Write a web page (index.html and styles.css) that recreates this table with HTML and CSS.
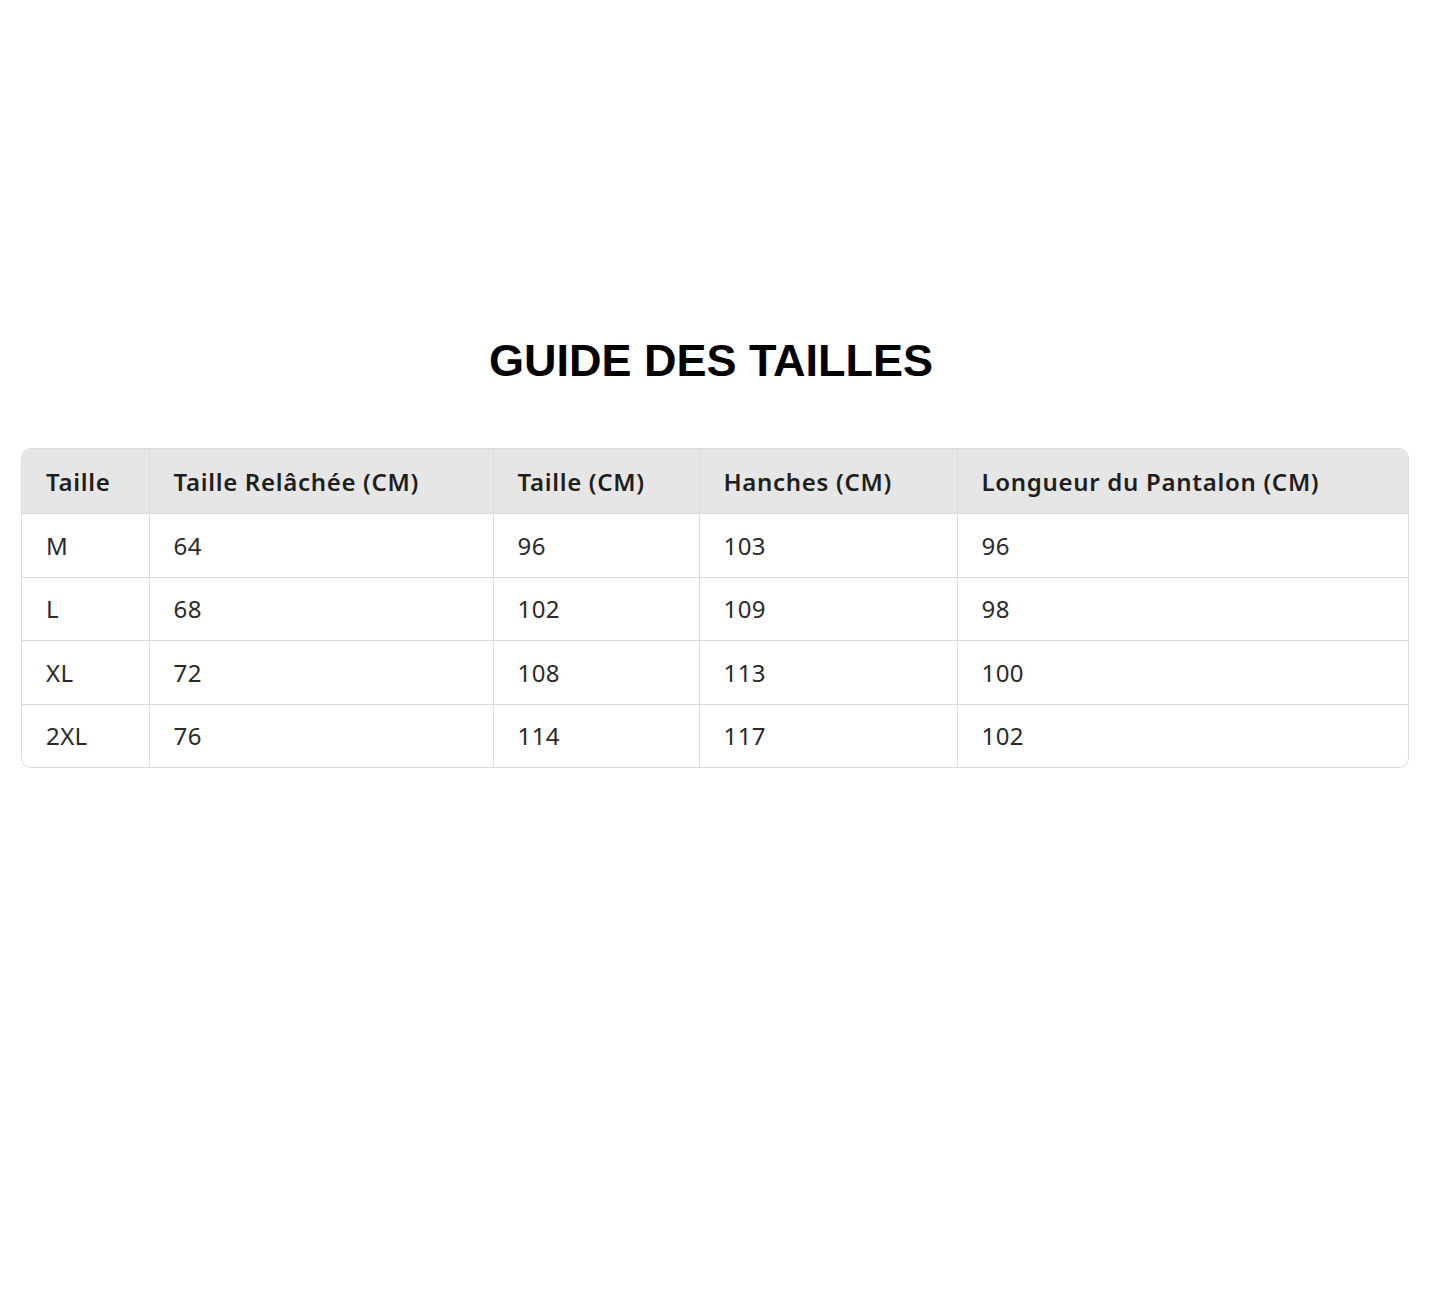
FILE: index.html
```html
<!DOCTYPE html>
<html lang="fr">
<head>
<meta charset="utf-8">
<title>Guide des tailles</title>
<link rel="stylesheet" href="styles.css">
</head>
<body>
<main class="page">
  <h1 class="title">GUIDE DES TAILLES</h1>
  <div class="table-wrap">
    <table class="size-table">
      <colgroup>
        <col class="c1"><col class="c2"><col class="c3"><col class="c4"><col class="c5">
      </colgroup>
      <thead>
        <tr>
          <th>Taille</th>
          <th>Taille Relâchée (CM)</th>
          <th>Taille (CM)</th>
          <th>Hanches (CM)</th>
          <th>Longueur du Pantalon (CM)</th>
        </tr>
      </thead>
      <tbody>
        <tr><td>M</td><td>64</td><td>96</td><td>103</td><td>96</td></tr>
        <tr><td>L</td><td>68</td><td>102</td><td>109</td><td>98</td></tr>
        <tr><td>XL</td><td>72</td><td>108</td><td>113</td><td>100</td></tr>
        <tr><td>2XL</td><td>76</td><td>114</td><td>117</td><td>102</td></tr>
      </tbody>
    </table>
  </div>
</main>
</body>
</html>
```
FILE: styles.css
```css
html, body {
  margin: 0;
  padding: 0;
  background: #ffffff;
}

.page {
  padding: 333px 21px 0 21px;
}

.title {
  margin: 0 0 59px 0;
  padding-right: 8px;
  font-family: "Liberation Sans", Arial, sans-serif;
  font-weight: 700;
  font-size: 45px;
  line-height: 56px;
  text-align: center;
  color: #000;
}

.table-wrap {
  border: 1px solid #dcdcdc;
  border-radius: 10px;
  overflow: hidden;
}

.size-table {
  width: 100%;
  border-collapse: collapse;
  table-layout: fixed;
  font-family: "Noto Sans", "Open Sans", sans-serif;
  font-size: 24px;
  letter-spacing: 0.4px;
  color: #222;
}

.c1 { width: 127px; }
.c2 { width: 344px; }
.c3 { width: 206px; }
.c4 { width: 258px; }

.size-table th,
.size-table td {
  text-align: left;
  padding: 0 0 0 24px;
  border-left: 1px solid #dcdcdc;
  border-top: 1px solid #dcdcdc;
  vertical-align: middle;
  white-space: nowrap;
}

.size-table th:first-child,
.size-table td:first-child {
  border-left: none;
}

.size-table thead th {
  border-top: none;
  height: 64px;
  background: #e6e6e6;
  font-weight: 600;
  letter-spacing: 0.7px;
  color: #1e1e1e;
}

.size-table thead tr {
  border-bottom: 1px solid #d0d0d0;
}

.size-table tbody td {
  height: 62.5px;
  font-weight: 400;
  color: #2a2a2a;
}
```
